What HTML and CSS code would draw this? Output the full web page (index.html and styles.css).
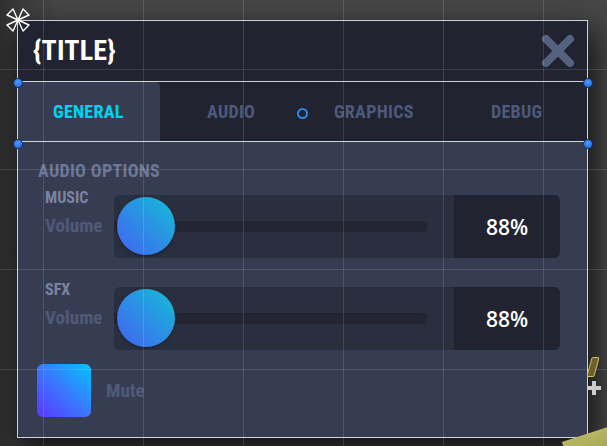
FILE: index.html
```html
<!DOCTYPE html>
<html>
<head>
<meta charset="utf-8">
<link rel="stylesheet" href="styles.css">
</head>
<body>
<div class="scene">
  <div class="panel">
    <header class="head">
      <h1 class="title">{TITLE}</h1>
      <svg class="close" width="34" height="34" viewBox="0 0 34 34"><path d="M5 5 L29 29 M29 5 L5 29" stroke="#55627f" stroke-width="8" stroke-linecap="round"/></svg>
    </header>
    <nav class="tabs">
      <div class="tab active">GENERAL</div>
      <div class="tab">AUDIO</div>
      <div class="tab">GRAPHICS</div>
      <div class="tab">DEBUG</div>
    </nav>
    <section class="content">
      <h2 class="section">AUDIO OPTIONS</h2>
      <div class="row">
        <div class="labels"><span class="cat">MUSIC</span><span class="vol">Volume</span></div>
        <div class="slider">
          <div class="track-area"><div class="track"></div><div class="knob"></div></div>
          <div class="value">88%</div>
        </div>
      </div>
      <div class="row">
        <div class="labels"><span class="cat">SFX</span><span class="vol">Volume</span></div>
        <div class="slider">
          <div class="track-area"><div class="track"></div><div class="knob"></div></div>
          <div class="value">88%</div>
        </div>
      </div>
      <div class="mute"><div class="check"></div><span class="mute-label">Mute</span></div>
    </section>
  </div>
  <div class="grid"></div>
  <div class="outline"></div>
  <div class="sel-rect"></div>
  <span class="dot d1"></span><span class="dot d2"></span><span class="dot d3"></span><span class="dot d4"></span>
  <span class="pivot"></span>
  <svg class="anchor" width="28" height="28" viewBox="0 0 28 28">
    <g fill="none" stroke="#fff" stroke-width="1.4" stroke-linejoin="round">
      <path d="M14 14 L3 9 L9 3 Z"/>
      <path d="M14 14 L25 9 L19 3 Z"/>
      <path d="M14 14 L3 19 L9 25 Z"/>
      <path d="M14 14 L25 19 L19 25 Z"/>
    </g>
  </svg>
  <span class="plus"></span>
  <span class="gizmo"></span>
  <span class="ground"></span>
</div>
</body>
</html>
```
FILE: styles.css
```css
* { box-sizing: border-box; }
html, body { margin: 0; padding: 0; }
body {
  width: 607px; height: 446px; overflow: hidden;
  background: #474747;
  font-family: "Roboto Condensed", "Liberation Sans Narrow", "DejaVu Sans Condensed", "Roboto", sans-serif;
  font-stretch: condensed;
}
.scene { position: relative; width: 607px; height: 446px; overflow: hidden;
  background: linear-gradient(to right, #2f2f2f 0px, #3a3a3a 17px, #474747 60px); }
.panel {
  position: absolute; left: 17px; top: 20px; width: 571px; height: 418px;
  display: flex; flex-direction: column;
  background: #363d52;
  border-radius: 0 0 0 8px;
  box-shadow: 0 14px 30px rgba(0,0,0,0.55), 10px 10px 30px rgba(0,0,0,0.4);
}
.head {
  height: 61px; flex: none; background: #222331;
  display: flex; align-items: center; justify-content: space-between;
  padding: 0 13px 0 16px;
}
.title { margin: 0; color: #fff; font-size: 28px; font-weight: 700; line-height: 30px; letter-spacing: 0.2px; }
.close { display: block; }
.tabs { height: 60px; flex: none; display: flex; background: #222331; }
.tab { flex: 1; display: flex; align-items: center; justify-content: center;
  color: #4c5a7b; font-size: 18px; font-weight: 700; letter-spacing: 0.3px; }
.tab.active { background: #363d52; color: #00d2f2; border-radius: 0 6px 0 0; }
.content { flex: 1; padding: 19px 0 0 21px; }
.section { margin: 0; font-size: 18px; line-height: 22px; font-weight: 700; color: #6b7796; letter-spacing: 0.3px; }
.row { display: grid; grid-template-columns: 69px 446px; margin: 6px 0 22px 7px; }
.row + .row { margin-top: 0; margin-bottom: 14px; }
.labels { display: flex; flex-direction: column; gap: 7px; }
.cat { font-size: 16px; line-height: 20px; font-weight: 700; color: #7a84a1; }
.vol { font-size: 19px; line-height: 22px; font-weight: 700; color: #4f5a78; }
.slider { margin-top: 7px; height: 63px; display: flex; border-radius: 6px; background: #2a2f3f; overflow: hidden; }
.track-area { flex: 1; position: relative; display: flex; align-items: center; }
.track { width: 314px; height: 11px; background: #232533; border-radius: 0 6px 6px 0; }
.knob { position: absolute; left: 3px; top: 2px; width: 58px; height: 58px; border-radius: 50%;
  background: linear-gradient(to bottom left, #12c0d4 0%, #2d8ee6 50%, #4263f0 100%);
  box-shadow: 0 1px 3px rgba(0,0,0,0.35); }
.value { width: 106px; flex: none; background: #222331; display: flex; align-items: center; justify-content: center;
  color: #fff; font-family: "Open Sans", "Inter", sans-serif; font-stretch: normal; font-weight: 600; font-size: 21px; }
.mute { display: flex; align-items: center; gap: 15px; margin-left: -1px; }
.check { width: 54px; height: 53px; border-radius: 6px;
  background: linear-gradient(to bottom left, #00c6ff 0%, #3a78ff 50%, #5b36ff 100%); }
.mute-label { font-size: 19px; font-weight: 700; color: #4f5a78; }
.grid { position: absolute; inset: 0; pointer-events: none;
  background-image:
    linear-gradient(to right, rgba(255,255,255,0.12) 1px, transparent 1px),
    linear-gradient(to bottom, rgba(255,255,255,0.12) 1px, transparent 1px);
  background-size: 100px 100px;
  background-position: 43px 69px; }
.outline { position: absolute; left: 17px; top: 20px; width: 571px; height: 418px; border: 1px solid rgba(225,228,238,0.9); pointer-events: none; }
.sel-rect { position: absolute; left: 17px; top: 81px; width: 571px; height: 61px; border-top: 1px solid rgba(225,228,238,0.9); border-bottom: 1px solid rgba(225,228,238,0.9); }
.dot { position: absolute; width: 10px; height: 10px; border-radius: 50%;
  background: radial-gradient(circle at 50% 35%, #4d9bff, #1d62d6); border: 1px solid #14356e; }
.d1 { left: 13px; top: 78px; } .d2 { left: 583px; top: 78px; }
.d3 { left: 13px; top: 139px; } .d4 { left: 583px; top: 139px; }
.pivot { position: absolute; left: 297px; top: 108px; width: 11px; height: 11px; border-radius: 50%; border: 2px solid #3485e6; }
.anchor { position: absolute; left: 4px; top: 6px; }
.plus { position: absolute; left: 587px; top: 381px; width: 14px; height: 14px;
  background: linear-gradient(#ccc,#ccc) center/14px 4px no-repeat, linear-gradient(#ccc,#ccc) center/4px 14px no-repeat; }
.gizmo { position: absolute; left: 589px; top: 357px; width: 8px; height: 20px; background: #6e5e2c; border: 1px solid #d8c060; border-radius: 2px; transform: skewX(-15deg); }
.ground { position: absolute; left: 565px; top: 432px; width: 60px; height: 30px; background: linear-gradient(#b8b862,#9c9c50); transform: rotate(-18deg); }
```
